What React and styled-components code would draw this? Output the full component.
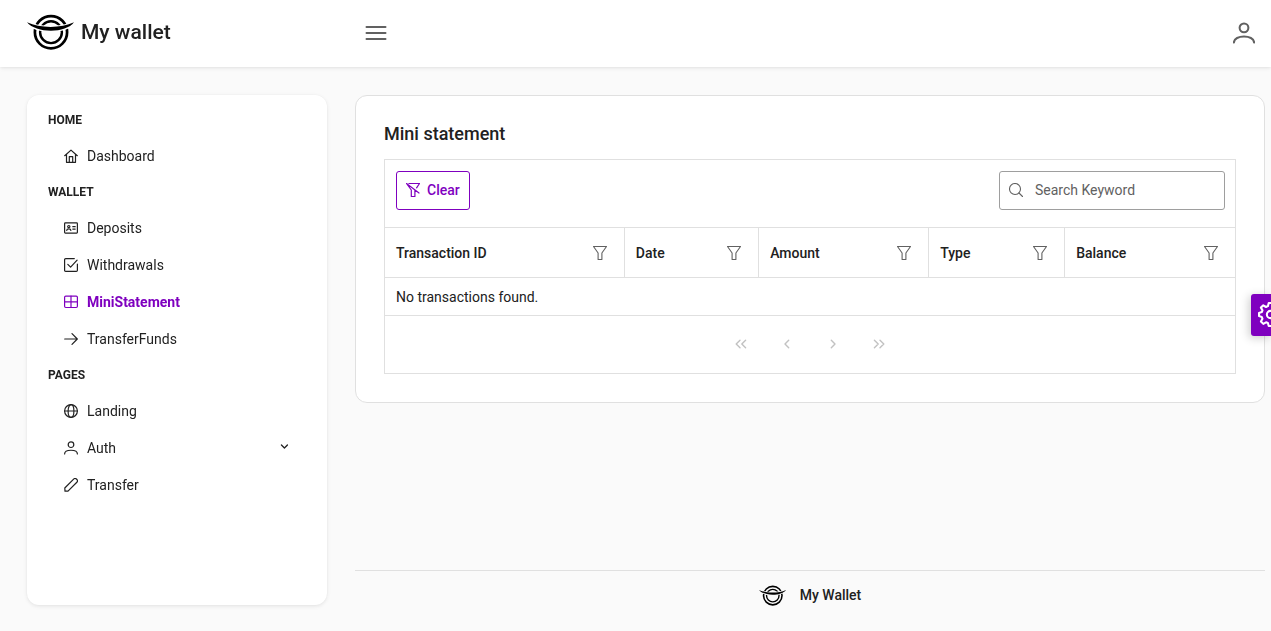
import React from "react";
import styled, { createGlobalStyle } from "styled-components";

const accent = "#7f00bf";
const text = "#212121";
const muted = "#616161";
const line = "#e0e0e0";
const canvas = "#fafafa";

const GlobalStyle = createGlobalStyle`
  *, *::before, *::after { box-sizing: border-box; }
  body {
    margin: 0;
    background: ${canvas};
    color: ${text};
    font-family: Roboto, "Liberation Sans", sans-serif;
    font-size: 14px;
    line-height: 16px;
  }
  button, input { font: inherit; color: inherit; }
  a { color: inherit; text-decoration: none; }
`;

const Page = styled.div`
  display: flex;
  flex-direction: column;
  min-height: 100vh;
`;

const Topbar = styled.header`
  position: sticky;
  top: 0;
  z-index: 2;
  display: flex;
  align-items: center;
  height: 67px;
  padding: 0 16px 2px 27px;
  background: #fff;
  box-shadow: 0 3px 5px rgba(0, 0, 0, 0.02), 0 0 2px rgba(0, 0, 0, 0.05), 0 1px 4px rgba(0, 0, 0, 0.08);
  will-change: transform;
`;

const Brand = styled.a`
  display: flex;
  align-items: center;
  gap: 7px;
  width: 338px;
  padding-bottom: 2px;
  font-size: 21px;
  line-height: 24px;
  font-weight: 500;
`;

const IconButton = styled.button`
  display: flex;
  padding: 0;
  border: 0;
  background: none;
  color: ${(p) => p.$color || muted};
  cursor: pointer;
`;

const Spacer = styled.div`
  flex: 1;
`;

const Body = styled.div`
  flex: 1;
  display: flex;
  gap: 28px;
  padding: 28px 6px 0 27px;
`;

const Sidebar = styled.nav`
  flex: 0 0 300px;
  align-self: flex-start;
  min-height: calc(100vh - 121px);
  padding: 7px 21px;
  border-radius: 12px;
  background: #fff;
  box-shadow: 0 3px 5px rgba(0, 0, 0, 0.02), 0 0 2px rgba(0, 0, 0, 0.05), 0 1px 4px rgba(0, 0, 0, 0.08);
  will-change: transform;
`;

const MenuHeading = styled.h2`
  margin: 0;
  padding: 11px 0 10px;
  font-size: 12px;
  line-height: 14px;
  font-weight: 700;
  text-transform: uppercase;
`;

const MenuList = styled.ul`
  margin: 0;
  padding: 0;
  list-style: none;
`;

const MenuLink = styled.a`
  display: flex;
  align-items: center;
  gap: 9px;
  height: 37px;
  padding: 0 16px;
  color: ${(p) => (p.$active ? accent : text)};
  font-weight: ${(p) => (p.$active ? 700 : 400)};
`;

const MenuLabel = styled.span`
  flex: 1;
`;

const Main = styled.div`
  flex: 1;
  min-width: 0;
  display: flex;
  flex-direction: column;
  justify-content: space-between;
`;

const Card = styled.section`
  padding: 28px;
  border: 1px solid ${line};
  border-radius: 12px;
  background: #fff;
`;

const Title = styled.h1`
  margin: 0 0 16px;
  font-size: 18px;
  line-height: 19px;
  font-weight: 500;
`;

const Grid = styled.div`
  border: 1px solid ${line};
`;

const Toolbar = styled.div`
  display: flex;
  justify-content: space-between;
  align-items: flex-start;
  height: 67px;
  padding: 11px 10px 0 11px;
`;

const ClearButton = styled.button`
  display: flex;
  align-items: center;
  gap: 7px;
  height: 39px;
  padding: 0 9px 2px;
  border: 1px solid ${accent};
  border-radius: 3px;
  background: #fff;
  color: ${accent};
  font-weight: 500;
  cursor: pointer;
`;

const SearchBox = styled.label`
  display: flex;
  align-items: center;
  gap: 12px;
  width: 226px;
  height: 39px;
  padding: 0 9px 2px;
  border: 1px solid #9e9e9e;
  border-radius: 3px;
  color: ${muted};
`;

const SearchInput = styled.input`
  flex: 1;
  min-width: 0;
  padding: 0;
  border: 0;
  outline: 0;
  background: none;
  color: ${text};
  &::placeholder { color: ${muted}; opacity: 1; }
`;

const Table = styled.table`
  width: 100%;
  table-layout: fixed;
  border-collapse: separate;
  border-spacing: 0;
`;

const HeadCell = styled.th`
  width: ${(p) => p.$width};
  height: 51px;
  padding: 0 17px 0 11px;
  border-top: 1px solid ${line};
  border-bottom: 1px solid ${line};
  text-align: left;
  font-weight: 500;
  & + & { border-left: 1px solid ${line}; }
`;

const HeadContent = styled.div`
  display: flex;
  align-items: center;
  justify-content: space-between;
`;

const Cell = styled.td`
  height: 38px;
  padding: 0 11px;
  border-bottom: 1px solid ${line};
`;

const Paginator = styled.div`
  display: flex;
  justify-content: center;
  align-items: center;
  gap: 4px;
  height: 57px;
  padding-bottom: 2px;
`;

const PageButton = styled.button`
  display: flex;
  justify-content: center;
  align-items: center;
  width: 42px;
  height: 42px;
  padding: 0;
  border: 0;
  background: none;
  color: #c2c2c2;
`;

const Footer = styled.footer`
  display: flex;
  align-items: center;
  justify-content: center;
  gap: 14px;
  height: 61px;
  padding-bottom: 12px;
  border-top: 1px solid ${line};
  font-weight: 500;
`;

const ConfigButton = styled.button`
  position: fixed;
  top: calc(50% - 22px);
  right: 0;
  z-index: 3;
  display: flex;
  align-items: center;
  width: 20px;
  height: 42px;
  padding: 0 0 0 7px;
  border: 0;
  border-radius: 3px 0 0 3px;
  background: ${accent};
  color: #fff;
  box-shadow: -2px 2px 10px rgba(0, 0, 0, 0.2);
  overflow: hidden;
  cursor: pointer;
`;

const Svg = styled.svg`
  display: block;
  flex: none;
  fill: none;
  stroke: currentColor;
  stroke-linecap: round;
  stroke-linejoin: round;
`;

const shapes = {
  home: <><path d="M.7 6.7 7 1.1l6.3 5.6M2.5 5.6v7.7h9V5.6M5.3 13V7.6h3.4V13" /></>,
  card: <><rect x=".6" y="1.9" width="12.8" height="10.2" rx=".8" /><circle cx="4.8" cy="5.6" r="1.1" /><path d="M2.7 9.4c.2-2 4-2 4.2 0M8.8 5.7h2.4M8.8 8.1h2.4" /></>,
  check: <><path d="M13.4 6.2v6.1c0 .7-.4 1.1-1.1 1.1H1.7c-.7 0-1.1-.4-1.1-1.1V1.7C.6 1 1 .6 1.7.6h8.6" /><path d="m3.8 6.4 2.8 2.8 6.5-7" /></>,
  table: <><rect x=".6" y="1.1" width="12.8" height="11.4" rx="1.2" /><path d="M.6 6.8h12.8M7 1.1v11.4" /></>,
  arrow: <path d="M.7 7h12.6M8 1.7 13.3 7 8 12.3" />,
  globe: <><circle cx="7" cy="7" r="6.4" /><ellipse cx="7" cy="7" rx="2.9" ry="6.4" /><path d="M.6 7h12.8" /></>,
  user: <><circle cx="7" cy="3.7" r="2.8" /><path d="M.6 13c0-5 12.8-5 12.8 0" /></>,
  pencil: <path d="M1 13.1.8 10 9.9.9c1.7-1.4 4.6 1.3 3.2 3.1L4 13.1z" />,
  filter: <path d="M.5.5h13L8.9 7v6.5H5.1V7z" />,
  filterSlash: <path d="M3 .5h10.5L10.6 4.8M.5.5 13 10M.5.5 5.3 7v6.5h3.6V7.2" />,
  search: <><circle cx="6" cy="6" r="5.5" /><path d="m10 10 3.5 3.5" /></>,
  chevronDown: <path d="M4 3.500 7.500 7 11 3.500" />,
  left: <path d="M8.7 3.2 5 7l3.7 3.8" />,
  right: <path d="M5.3 3.2 9 7l-3.7 3.8" />,
  doubleLeft: <path d="M6 3.2 2.2 7 6 10.8M11.6 3.2 7.8 7l3.8 3.8" />,
  doubleRight: <path d="M2.4 3.2 6.2 7l-3.8 3.8M8 3.2 11.8 7 8 10.8" />,
};

const Icon = ({ name, size = 14, weight = 1.2 }) => (
  <Svg width={size} height={size} viewBox="0 0 14 14" strokeWidth={weight} aria-hidden="true">
    {shapes[name]}
  </Svg>
);

const MenuIcon = () => (
  <Svg width="22" height="22" viewBox="0 0 22 22" strokeWidth="2" aria-hidden="true">
    <path d="M1.5 5h19M1.5 11h19M1.5 17h19" />
  </Svg>
);

const Gear = () => (
  <Svg width="25" height="25" viewBox="0 0 24 24" strokeWidth="2" aria-hidden="true">
    <circle cx="12" cy="12" r="3.500" />
    <path d="M10.300 1h3.400l.8 3 1.800.8 2.700-1.600 2.200 2.300-1.500 2.600.7 1.700 2.800.8v2.900l-2.800.8-.7 1.800 1.500 2.600-2.300 2.300-2.600-1.500-1.800.7-.8 2.800h-3.400l-.8-2.800-1.800-.7-2.600 1.500L2.800 18.700l1.500-2.600-.7-1.800-2.600-.8v-3l2.600-.8.7-1.700-1.500-2.600L5.100 3.200l2.600 1.600 1.800-.8z" />
  </Svg>
);

const Logo = ({ width, height, background = "#fff" }) => (
  <svg width={width} height={height} viewBox="0 0 47 36" aria-hidden="true">
    <g fill="none" stroke="#000">
      <circle cx="24" cy="18.200" r="16.100" strokeWidth="2.700" />
      <circle cx="24" cy="18.200" r="10.900" strokeWidth="2.400" />
    </g>
    <path
      d="M0 8.300C13 14.500 34 14.500 47 8.300 39 19.500 9 19.500 0 8.300z"
      fill={background}
      stroke={background}
      strokeWidth="2.400"
    />
    <path d="M0 8.300C13 14.500 34 14.500 47 8.300 39 19.500 9 19.500 0 8.300z" fill="#000" />
  </svg>
);

const menu = [
  { heading: "Home", items: [["Dashboard", "home"]] },
  {
    heading: "Wallet",
    items: [
      ["Deposits", "card"],
      ["Withdrawals", "check"],
      ["MiniStatement", "table"],
      ["TransferFunds", "arrow"],
    ],
  },
  { heading: "Pages", items: [["Landing", "globe"], ["Auth", "user"], ["Transfer", "pencil"]] },
];

const columns = [
  ["Transaction ID", "28.1%"],
  ["Date", "15.8%"],
  ["Amount", "20%"],
  ["Type", "16%"],
  ["Balance", "20.1%"],
];

const pages = [
  ["First page", "doubleLeft"],
  ["Previous page", "left"],
  ["Next page", "right"],
  ["Last page", "doubleRight"],
];

export default function App() {
  return (
    <Page>
      <GlobalStyle />
      <Topbar>
        <Brand href="#">
          <Logo width={47} height={36} />
          <span>My wallet</span>
        </Brand>
        <IconButton type="button" aria-label="Toggle menu"><MenuIcon /></IconButton>
        <Spacer />
        <IconButton type="button" aria-label="Profile"><Icon name="user" size={22} weight={1.3} /></IconButton>
      </Topbar>
      <Body>
        <Sidebar>
          {menu.map((group) => (
            <React.Fragment key={group.heading}>
              <MenuHeading>{group.heading}</MenuHeading>
              <MenuList>
                {group.items.map(([label, icon]) => (
                  <li key={label}>
                    <MenuLink href="#" $active={label === "MiniStatement"}>
                      <Icon name={icon} />
                      <MenuLabel>{label}</MenuLabel>
                      {label === "Auth" && <Icon name="chevronDown" size={12} weight={1.5} />}
                    </MenuLink>
                  </li>
                ))}
              </MenuList>
            </React.Fragment>
          ))}
        </Sidebar>
        <Main>
          <Card>
            <Title>Mini statement</Title>
            <Grid>
              <Toolbar>
                <ClearButton type="button"><Icon name="filterSlash" />Clear</ClearButton>
                <SearchBox>
                  <Icon name="search" weight={1.1} />
                  <SearchInput type="text" placeholder="Search Keyword" aria-label="Search Keyword" />
                </SearchBox>
              </Toolbar>
              <Table>
                <thead>
                  <tr>
                    {columns.map(([label, width]) => (
                      <HeadCell key={label} $width={width} scope="col">
                        <HeadContent>
                          {label}
                          <IconButton type="button" aria-label={`Filter ${label}`}><Icon name="filter" weight={1.1} /></IconButton>
                        </HeadContent>
                      </HeadCell>
                    ))}
                  </tr>
                </thead>
                <tbody>
                  <tr><Cell colSpan={5}>No transactions found.</Cell></tr>
                </tbody>
              </Table>
              <Paginator>
                {pages.map(([label, icon]) => (
                  <PageButton key={label} type="button" disabled aria-label={label}>
                    <Icon name={icon} weight={1.4} />
                  </PageButton>
                ))}
              </Paginator>
            </Grid>
          </Card>
          <Footer>
            <Logo width={27} height={21} background={canvas} />
            <span>My Wallet</span>
          </Footer>
        </Main>
      </Body>
      <ConfigButton type="button" aria-label="Settings"><Gear /></ConfigButton>
    </Page>
  );
}
